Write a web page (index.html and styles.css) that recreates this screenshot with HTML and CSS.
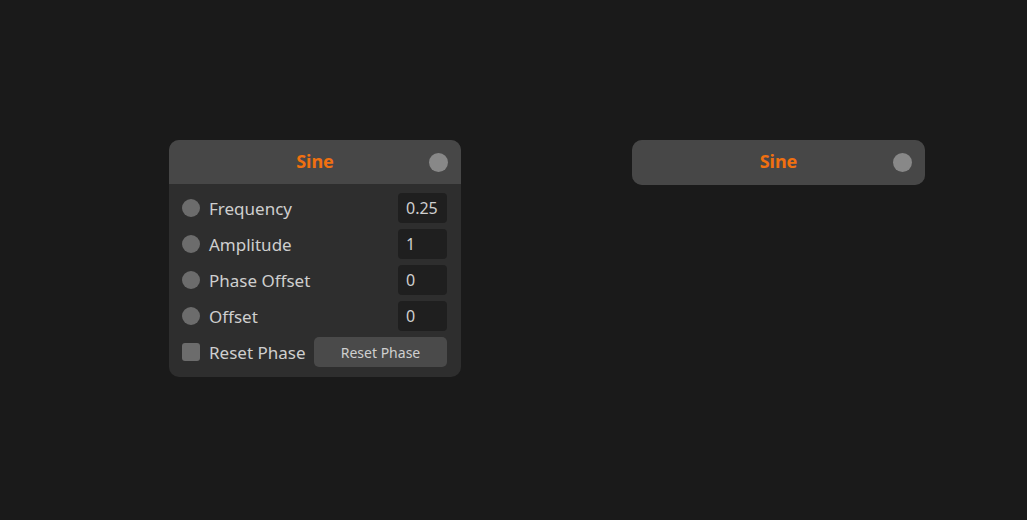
FILE: index.html
```html
<!DOCTYPE html>
<html>
<head>
  <meta charset="UTF-8">
  <title>Sine</title>
  <link rel="stylesheet" href="styles.css">
</head>
<body>
  <div class="canvas">
    <div class="node node-open">
      <div class="node-header">
        <span class="node-title">Sine</span>
        <span class="port port-out"></span>
      </div>
      <div class="node-body">
        <div class="row">
          <span class="port"></span>
          <span class="label">Frequency</span>
          <input class="value" type="text" value="0.25">
        </div>
        <div class="row">
          <span class="port"></span>
          <span class="label">Amplitude</span>
          <input class="value" type="text" value="1">
        </div>
        <div class="row">
          <span class="port"></span>
          <span class="label">Phase Offset</span>
          <input class="value" type="text" value="0">
        </div>
        <div class="row">
          <span class="port"></span>
          <span class="label">Offset</span>
          <input class="value" type="text" value="0">
        </div>
        <div class="row">
          <span class="check"></span>
          <span class="label">Reset Phase</span>
          <button class="action">Reset Phase</button>
        </div>
      </div>
    </div>

    <div class="node node-closed">
      <div class="node-header">
        <span class="node-title">Sine</span>
        <span class="port port-out"></span>
      </div>
    </div>
  </div>
</body>
</html>
```

FILE: styles.css
```css
html, body {
  margin: 0;
  height: 100%;
  background-color: #1a1a1a;
  font-family: "Noto Sans", "Open Sans", sans-serif;
  color: #cfcfcf;
}

.canvas {
  position: relative;
  width: 100%;
  height: 100%;
  overflow: hidden;
}

.node {
  position: absolute;
  top: 140px;
  width: 292px;
  border-radius: 10px;
  background-color: #2e2e2e;
  overflow: hidden;
}

.node-open {
  left: 169px;
}

.node-closed {
  left: 632px;
  width: 293px;
}

.node-header {
  position: relative;
  height: 44px;
  display: flex;
  align-items: center;
  justify-content: center;
  background-color: #474747;
}

.node-closed .node-header {
  height: 45px;
}

.node-title {
  color: #f07010;
  font-weight: bold;
  font-size: 18px;
  padding-bottom: 3px;
}

.port {
  width: 18px;
  height: 18px;
  border-radius: 50%;
  background-color: #6c6c6c;
  flex: none;
}

.port-out {
  position: absolute;
  right: 13px;
  top: 13px;
  width: 19px;
  height: 19px;
  background-color: #888888;
}

.node-body {
  display: flex;
  flex-direction: column;
  gap: 6px;
  padding: 9px 14px 10px 13px;
}

.row {
  display: flex;
  align-items: center;
  height: 30px;
}

.label {
  margin-left: 9px;
  flex: 1;
  font-size: 17px;
  padding-top: 1px;
  color: #cfcfcf;
}

.value {
  width: 49px;
  height: 30px;
  box-sizing: border-box;
  border: none;
  border-radius: 4px;
  padding: 0 8px;
  background-color: #1f1f1f;
  color: #cfcfcf;
  font-family: inherit;
  font-size: 16px;
  outline: none;
}

.check {
  width: 18px;
  height: 18px;
  border-radius: 3px;
  background-color: #6c6c6c;
  flex: none;
}

.check + .label {
  flex: none;
}

.action {
  margin-left: auto;
  width: 133px;
  height: 30px;
  border: none;
  border-radius: 5px;
  background-color: #4a4a4a;
  color: #cfcfcf;
  font-family: inherit;
  font-size: 14px;
}
```
